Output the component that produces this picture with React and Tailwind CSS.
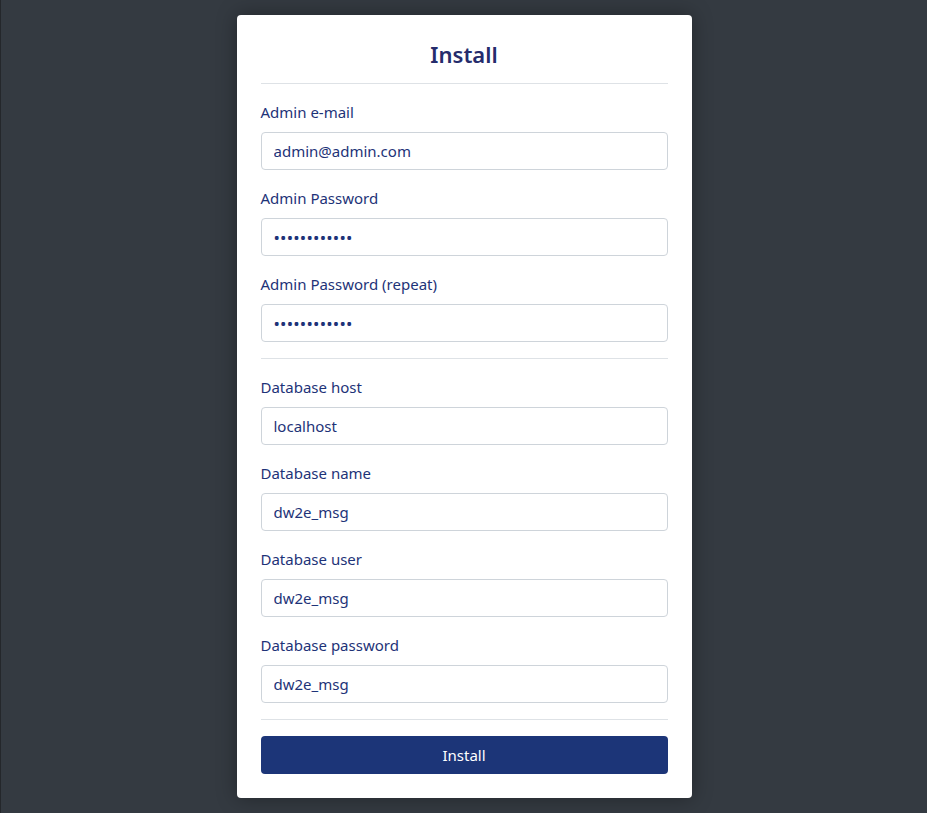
import React from "react";

const font = { fontFamily: '"Noto Sans", "Open Sans", sans-serif' };

function Field({ label, value, type = "text" }) {
  const pw = type === "password";
  return (
    <div className="flex flex-col">
      <label className="text-[15px] leading-6 text-[#1e3378] mb-2">{label}</label>
      <input
        type={type}
        defaultValue={value}
        readOnly
        className={
          pw
            ? "h-[38px] w-full rounded-[4px] border border-[#ced4da] bg-white px-3 text-[17px] tracking-[0.2px] text-[#1e3378] outline-none"
            : "h-[38px] w-full rounded-[4px] border border-[#ced4da] bg-white px-3 text-[15px] text-[#1e3378] outline-none"
        }
        style={font}
      />
    </div>
  );
}

export default function App() {
  return (
    <div
      className="min-h-[813px] w-full bg-[#343a41] border-l border-[#24272b] flex justify-center pt-[15px] pb-[15px]"
      style={font}
    >
      <div className="w-[455px] h-fit bg-white rounded-[4px] p-6 shadow-[0_0_20px_rgba(0,0,0,0.35)] flex flex-col">
        <h1 className="text-center text-[22px] leading-8 font-semibold text-[#252c6c] pb-px -mt-px">Install</h1>
        <hr className="mt-3 mb-4 border-0 border-t border-[#dee2e6]" />
        <div className="flex flex-col gap-4">
          <Field label="Admin e-mail" value="admin@admin.com" />
          <Field label="Admin Password" value="123456789012" type="password" />
          <Field label="Admin Password (repeat)" value="123456789012" type="password" />
        </div>
        <hr className="my-4 border-0 border-t border-[#dee2e6]" />
        <div className="flex flex-col gap-4">
          <Field label="Database host" value="localhost" />
          <Field label="Database name" value="dw2e_msg" />
          <Field label="Database user" value="dw2e_msg" />
          <Field label="Database password" value="dw2e_msg" />
        </div>
        <hr className="my-4 border-0 border-t border-[#dee2e6]" />
        <button className="h-[38px] w-full rounded-[4px] bg-[#1c3578] text-white text-[15px]">Install</button>
      </div>
    </div>
  );
}
